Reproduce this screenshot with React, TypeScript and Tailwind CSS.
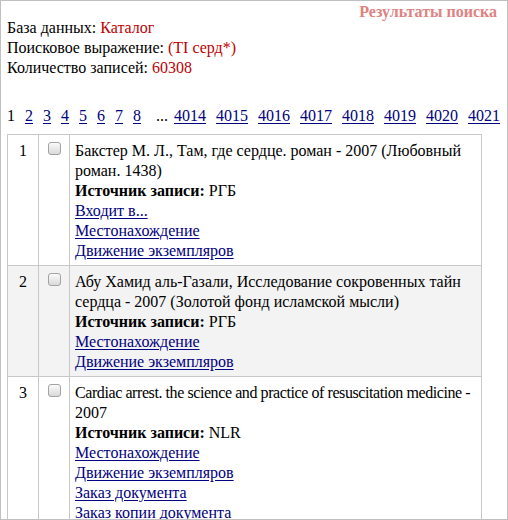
const pages = ["2", "3", "4", "5", "6", "7", "8"]
const farPages = ["4014", "4015", "4016", "4017", "4018", "4019", "4020", "4021"]

type Record = {
  n: number
  title: React.ReactNode
  source: string
  links: string[]
  shaded?: boolean
}

const records: Record[] = [
  {
    n: 1,
    title: (
      <>
        Бакстер М. Л., Там, где сердце. роман - 2007 (Любовный
        <br />
        роман. 1438)
      </>
    ),
    source: "РГБ",
    links: ["Входит в...", "Местонахождение", "Движение экземпляров"],
  },
  {
    n: 2,
    title: (
      <>
        Абу Хамид аль-Газали, Исследование сокровенных тайн
        <br />
        сердца - 2007 (Золотой фонд исламской мысли)
      </>
    ),
    source: "РГБ",
    links: ["Местонахождение", "Движение экземпляров"],
    shaded: true,
  },
  {
    n: 3,
    title: (
      <>
        <span className="tracking-[-0.42px]">Cardiac arrest. the science and practice of resuscitation medicine -</span>
        <br />
        2007
      </>
    ),
    source: "NLR",
    links: ["Местонахождение", "Движение экземпляров", "Заказ документа", "Заказ копии документа", "Выдача"],
  },
]

function Link({ children }: { children: React.ReactNode }) {
  return <a href="#" className="text-[#000080] underline underline-offset-[2px]">{children}</a>
}

function RecordRow({ record }: { record: Record }) {
  return (
    <tr className={record.shaded ? "bg-[#f3f3f3]" : "bg-white"}>
      <td className="border border-[#c8c8c8] align-top text-center pt-[6px] pb-[4px]">{record.n}</td>
      <td className="border border-[#c8c8c8] align-top pt-[7px]">
        <input
          type="checkbox"
          className="block mx-auto appearance-none w-[13px] h-[13px] border border-[#a3a3a3] rounded-[3px] bg-gradient-to-b from-[#fbfbfb] to-[#d9d9d9]"
        />
      </td>
      <td className="border border-[#c8c8c8] align-top pl-[5px] pr-[4px] pt-[6px] pb-[4px] whitespace-nowrap">
        <div>{record.title}</div>
        <div>
          <b>Источник записи:</b> {record.source}
        </div>
        {record.links.map((l) => (
          <div key={l}>
            <Link>{l}</Link>
          </div>
        ))}
      </td>
    </tr>
  )
}

export default function App() {
  return (
    <div className="w-[508px] h-[520px] border border-[#c0c0c0] overflow-hidden bg-white text-black text-[16px] leading-[20px] font-['Liberation_Serif','Times_New_Roman',serif]">
      <div className="pt-[3px] pr-[10px] h-[17px] text-right font-bold text-[#e08282] leading-[16px]">
        Результаты поиска
      </div>
      <div className="pl-[6px]">
        <div>
          База данных: <span className="text-[#c00000]">Каталог</span>
        </div>
        <div>
          Поисковое выражение: <span className="text-[#c00000]">(TI серд*)</span>
        </div>
        <div>
          Количество записей: <span className="text-[#c00000]">60308</span>
        </div>
        <div className="mt-[28px] flex items-baseline whitespace-nowrap">
          <span>1</span>
          {pages.map((p) => (
            <span key={p} className="ml-[10px]">
              <Link>{p}</Link>
            </span>
          ))}
          <span className="ml-[15px]">...</span>
          {farPages.map((p, i) => (
            <span key={p} className={i === 0 ? "ml-[6px]" : "ml-[10px]"}>
              <Link>{p}</Link>
            </span>
          ))}
        </div>
        <table className="mt-[8px] w-[475px] table-fixed border-collapse">
          <colgroup>
            <col className="w-[31px]" />
            <col className="w-[31px]" />
            <col />
          </colgroup>
          <tbody>
            {records.map((r) => (
              <RecordRow key={r.n} record={r} />
            ))}
          </tbody>
        </table>
      </div>
    </div>
  )
}
